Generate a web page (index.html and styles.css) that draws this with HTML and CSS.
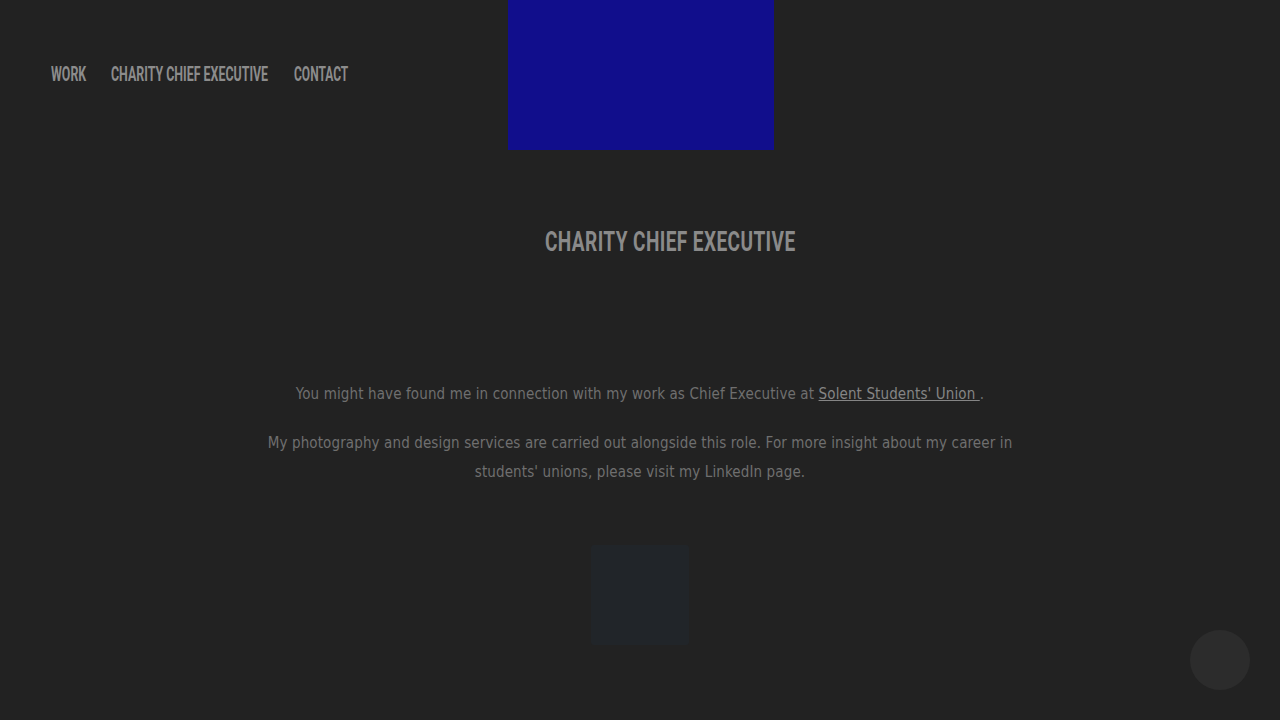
FILE: index.html
```html
<!DOCTYPE html>
<html lang="en">
<head>
<meta charset="utf-8">
<title>Charity Chief Executive</title>
<link rel="stylesheet" href="styles.css">
</head>
<body>
<header class="site-header">
  <nav class="nav">
    <a class="nav-link nav-work" href="#"><span class="cond">WORK</span></a>
    <a class="nav-link nav-charity" href="#"><span class="cond">CHARITY CHIEF EXECUTIVE</span></a>
    <a class="nav-link nav-contact" href="#"><span class="cond cond-narrow">CONTACT</span></a>
  </nav>
  <div class="logo-box"></div>
</header>
<main class="content">
  <h1 class="title"><span class="cond-title">CHARITY CHIEF EXECUTIVE</span></h1>
  <div class="text">
    <p>You might have found me in connection with my work as Chief Executive at <a class="inline-link" href="#">Solent Students' Union </a>.</p>
    <p>My photography and design services are carried out alongside this role. For more insight about my career in students' unions, please visit my LinkedIn page.</p>
  </div>
  <div class="embed-box"></div>
</main>
<div class="fab"></div>
</body>
</html>
```
FILE: styles.css
```css
html, body {
  margin: 0;
  padding: 0;
  background: #222222;
  height: 100%;
  overflow: hidden;
}
body {
  font-family: "DejaVu Sans Condensed", "DejaVu Sans", sans-serif;
}
.site-header {
  position: relative;
  height: 150px;
}
.nav {
  display: flex;
  gap: 25px;
  padding: 62px 0 0 51px;
}
.nav-link {
  display: block;
  font-family: Roboto, "DejaVu Sans Condensed", sans-serif;
  font-weight: bold;
  font-size: 20px;
  line-height: 24px;
  color: #8c8c8c;
  text-decoration: none;
  white-space: nowrap;
}
.nav-work { width: 35px; }
.nav-charity { width: 158px; }
.nav-contact { width: 54px; }
.cond {
  display: inline-block;
  transform: scaleX(0.62);
  transform-origin: 0 50%;
}
.cond-narrow {
  transform: scaleX(0.6);
}
.logo-box {
  position: absolute;
  left: 508px;
  top: 0;
  width: 266px;
  height: 150px;
  background: #110e8c;
}
.content {
  display: flex;
  flex-direction: column;
  align-items: center;
}
.title {
  margin: 76px 0 0 60px;
  font-family: Roboto, "DejaVu Sans Condensed", sans-serif;
  font-weight: bold;
  font-size: 28px;
  color: #8a8a8a;
  line-height: 32px;
  white-space: nowrap;
}
.cond-title {
  display: inline-block;
  letter-spacing: 0.6px;
  transform: scaleX(0.68);
  transform-origin: 50% 50%;
}
.text {
  margin-top: 122px;
  width: 755px;
  text-align: center;
  font-size: 15px;
  letter-spacing: 0.12px;
  line-height: 29px;
  color: #6f6f6f;
}
.text p {
  margin: 0 0 20px;
}
.inline-link {
  color: #858585;
  text-decoration: underline;
}
.embed-box {
  margin-top: 38px;
  width: 98px;
  height: 100px;
  background: #212529;
  border-radius: 3px;
}
.fab {
  position: fixed;
  right: 30px;
  bottom: 30px;
  width: 60px;
  height: 60px;
  border-radius: 50%;
  background: #2c2c2c;
}
```
